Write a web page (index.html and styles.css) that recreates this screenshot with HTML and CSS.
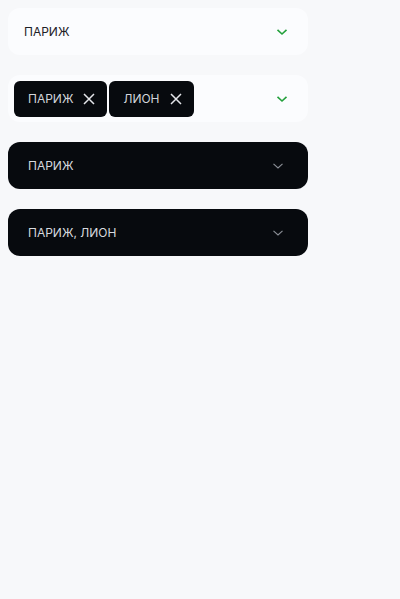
FILE: index.html
```html
<!DOCTYPE html>
<html lang="ru">
<head>
<meta charset="utf-8">
<link rel="stylesheet" href="styles.css">
</head>
<body>
<div class="stack">
  <div class="select light">
    <span class="value">ПАРИЖ</span>
    <svg class="chev green" width="12" height="8" viewBox="0 0 12 8"><path d="M1.5 1.8 L6 6 L10.5 1.8" fill="none" stroke="currentColor" stroke-width="1.6"/></svg>
  </div>
  <div class="select light multi">
    <div class="chips">
      <span class="chip">ПАРИЖ<svg class="x" width="12" height="12" viewBox="0 0 12 12"><path d="M1 1 L11 11 M11 1 L1 11" stroke="currentColor" stroke-width="1.5" fill="none"/></svg></span>
      <span class="chip">ЛИОН<svg class="x" width="12" height="12" viewBox="0 0 12 12"><path d="M1 1 L11 11 M11 1 L1 11" stroke="currentColor" stroke-width="1.5" fill="none"/></svg></span>
    </div>
    <svg class="chev green" width="12" height="8" viewBox="0 0 12 8"><path d="M1.5 1.8 L6 6 L10.5 1.8" fill="none" stroke="currentColor" stroke-width="1.6"/></svg>
  </div>
  <div class="select dark">
    <span class="value">ПАРИЖ</span>
    <svg class="chev grey" width="12" height="8" viewBox="0 0 12 8"><path d="M1.5 1.8 L6 6 L10.5 1.8" fill="none" stroke="currentColor" stroke-width="1.1"/></svg>
  </div>
  <div class="select dark">
    <span class="value">ПАРИЖ, ЛИОН</span>
    <svg class="chev grey" width="12" height="8" viewBox="0 0 12 8"><path d="M1.5 1.8 L6 6 L10.5 1.8" fill="none" stroke="currentColor" stroke-width="1.1"/></svg>
  </div>
</div>
</body>
</html>
```
FILE: styles.css
```css
html, body {
  margin: 0;
  padding: 0;
  background: #f7f8fa;
  font-family: Inter, "Noto Sans", sans-serif;
}
.stack {
  padding: 8px;
  display: flex;
  flex-direction: column;
  gap: 20px;
  width: 300px;
}
.select {
  height: 47px;
  box-sizing: border-box;
  border-radius: 12px;
  display: flex;
  align-items: center;
  justify-content: space-between;
  padding: 0 20px 0 16px;
  font-size: 12px;
}
.select.light {
  background: #fbfcfe;
  color: #1d2026;
}
.select.dark {
  background: #070a0e;
  color: #d6d9de;
  padding-left: 20px;
  padding-right: 24px;
}
.select.multi {
  padding-left: 6px;
}
.chips {
  display: flex;
  gap: 2px;
}
.chip {
  height: 36px;
  box-sizing: border-box;
  background: #070a0e;
  color: #d2d5da;
  border-radius: 6px;
  display: flex;
  align-items: center;
  gap: 10px;
  padding: 0 12px 0 14px;
}
.x { color: #e4e6ea; }
.chev { display: block; }
.green { color: #23a03c; }
.grey { color: #8b9097; }
```
